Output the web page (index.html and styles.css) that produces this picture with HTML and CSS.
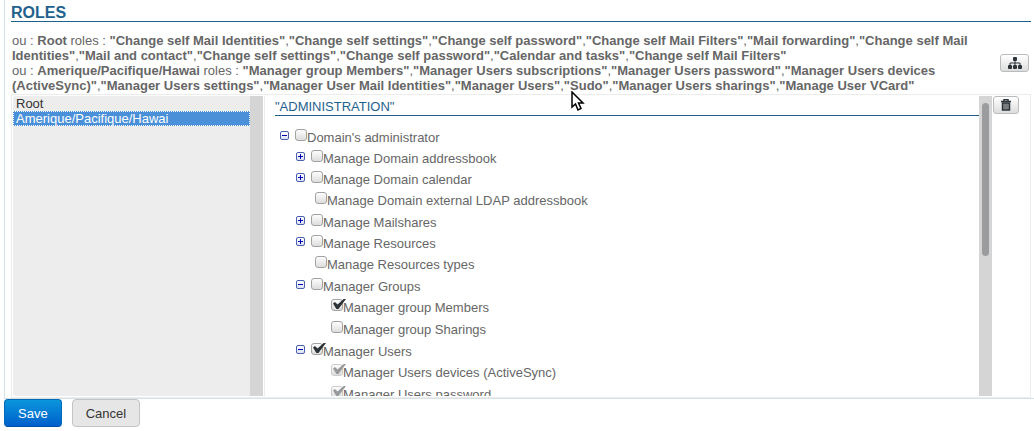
FILE: index.html
```html
<!DOCTYPE html>
<html lang="en">
<head>
<meta charset="utf-8">
<title>Roles</title>
<link rel="stylesheet" href="styles.css">
</head>
<body>
<main class="panel">
  <h1 class="title">ROLES</h1>
  <section class="summary">
    <div class="summary-text">
      <p>ou : <b>Root</b> roles : <b>"Change self Mail Identities"</b>,<b>"Change self settings"</b>,<b>"Change self password"</b>,<b>"Change self Mail Filters"</b>,<b>"Mail forwarding"</b>,<b>"Change self Mail<br>Identities"</b>,<b>"Mail and contact"</b>,<b>"Change self settings"</b>,<b>"Change self password"</b>,<b>"Calendar and tasks"</b>,<b>"Change self Mail Filters"</b></p>
      <p>ou : <b>Amerique/Pacifique/Hawai</b> roles : <b>"Manager group Members"</b>,<b>"Manager Users subscriptions"</b>,<b>"Manager Users password"</b>,<b>"Manager Users devices<br>(ActiveSync)"</b>,<b>"Manager Users settings"</b>,<b>"Manager User Mail Identities"</b>,<b>"Manager Users"</b>,<b>"Sudo"</b>,<b>"Manager Users sharings"</b>,<b>"Manage User VCard"</b></p>
    </div>
    <button class="icon-button tree-button" type="button" aria-label="Select organizational unit">
      <svg width="14" height="12" viewBox="0 0 14 12" fill="#2b3338"><rect x="5" width="4" height="4" rx="1"/><rect y="8" width="4" height="4" rx="1"/><rect x="5" y="8" width="4" height="4" rx="1"/><rect x="10" y="8" width="4" height="4" rx="1"/><path d="M7 3v6M2 9V6h10v3" fill="none" stroke="#2b3338"/></svg>
    </button>
  </section>
  <section class="editor">
    <select class="units" size="8" aria-label="Organizational units">
      <option>Root</option>
      <option class="current" selected>Amerique/Pacifique/Hawai</option>
    </select>
    <div class="roles">
      <div class="roles-view">
        <h2 class="category">"ADMINISTRATION"</h2>
        <ul class="tree">
          <li><div class="node"><button class="toggle open" type="button" aria-label="Collapse"></button><label><input type="checkbox">Domain's administrator</label></div>
            <ul>
              <li><div class="node"><button class="toggle" type="button" aria-label="Expand"></button><label><input type="checkbox">Manage Domain addressbook</label></div></li>
              <li><div class="node"><button class="toggle" type="button" aria-label="Expand"></button><label><input type="checkbox">Manage Domain calendar</label></div></li>
              <li><div class="node leaf"><label><input type="checkbox">Manage Domain external LDAP addressbook</label></div></li>
              <li><div class="node"><button class="toggle" type="button" aria-label="Expand"></button><label><input type="checkbox">Manage Mailshares</label></div></li>
              <li><div class="node"><button class="toggle" type="button" aria-label="Expand"></button><label><input type="checkbox">Manage Resources</label></div></li>
              <li><div class="node leaf"><label><input type="checkbox">Manage Resources types</label></div></li>
              <li><div class="node"><button class="toggle open" type="button" aria-label="Collapse"></button><label><input type="checkbox">Manager Groups</label></div>
                <ul>
                  <li><div class="node leaf"><label><input type="checkbox" checked>Manager group Members</label></div></li>
                  <li><div class="node leaf"><label><input type="checkbox">Manager group Sharings</label></div></li>
                </ul>
              </li>
              <li><div class="node"><button class="toggle open" type="button" aria-label="Collapse"></button><label><input type="checkbox" checked>Manager Users</label></div>
                <ul>
                  <li><div class="node leaf"><label><input type="checkbox" checked disabled>Manager Users devices (ActiveSync)</label></div></li>
                  <li><div class="node leaf"><label><input type="checkbox" checked disabled>Manager Users password</label></div></li>
                </ul>
              </li>
            </ul>
          </li>
        </ul>
      </div>
      <div class="track"><div class="thumb"></div></div>
    </div>
    <button class="icon-button trash-button" type="button" aria-label="Delete">
      <svg width="10" height="12" viewBox="0 0 10 12"><path d="M3 2V.5h4V2M0 2.500h10" fill="none" stroke="#2b3338" stroke-width="1.500"/><path d="M1.500 4h7v7h-7z" fill="#85898b" stroke="#2b3338" stroke-width="1.500"/><path d="M4 4.500v6M6 4.500v6" stroke="#5a6063" stroke-width=".6"/></svg>
    </button>
  </section>
</main>
<footer class="actions">
  <button class="action save" type="button">Save</button>
  <button class="action cancel" type="button">Cancel</button>
</footer>
<svg class="pointer" width="14" height="21" viewBox="0 0 14 21" aria-hidden="true"><path d="M1 1v15l3.500-3 2.500 6 3-1.500-2.500-5.500H12z" fill="#fff" stroke="#000" stroke-width="1.500"/></svg>
</body>
</html>
```
FILE: styles.css
```css
* {
  box-sizing: border-box;
}

body {
  margin: 0;
  background: #fff;
  color: #666;
  font: 13px/15px "Liberation Sans", Arial, sans-serif;
}

button, select, input {
  font: inherit;
  margin: 0;
}

.panel {
  margin-left: 4px;
  padding: 3px 3px 0 6px;
  border-left: 1px solid #d6e4ea;
  border-bottom: 1px solid #d6e2e5;
}

.title {
  margin: 0;
  height: 19px;
  border-bottom: 1px solid #1f618d;
  color: #1f618d;
  font-size: 16px;
  line-height: 19px;
}

.summary {
  display: flex;
  justify-content: space-between;
  padding: 11px 2px 0 1px;
}

.summary-text {
  white-space: nowrap;
}

.summary p {
  margin: 0;
}

.icon-button {
  display: flex;
  flex: none;
  align-items: center;
  justify-content: center;
  height: 18px;
  padding: 0;
  border: 1px solid #b8bcbe;
  border-radius: 3px;
  background: linear-gradient(#fff, #ddd);
}

.tree-button {
  width: 29px;
  margin-top: 21px;
}

.trash-button {
  width: 26px;
  margin: 0 11px 0 1px;
}

.editor {
  display: flex;
  height: 304px;
  margin-top: 1px;
  padding: 1px 0 1px 1px;
  border: 1px solid #ececec;
}

.units {
  flex: none;
  width: 250px;
  padding: 0;
  border: 0;
  border-right: 13px solid #d5d5d5;
  border-radius: 3px 0 0 3px;
  outline: none;
  overflow: hidden;
  background: #ededed;
  color: #333;
}

.units option {
  min-height: 15px;
  padding: 0 3px;
  line-height: 15px;
}

.units .current {
  outline: 1px dotted #fff;
  outline-offset: -1px;
  background: #4a90d9 linear-gradient(#4a90d9, #4a90d9);
  color: #fff;
}

.roles {
  display: flex;
  flex: 1;
  min-width: 0;
  margin-left: 1px;
  border-left: 1px solid #ececec;
}

.roles-view {
  flex: 1;
  min-width: 0;
  padding-left: 10px;
  overflow: hidden;
}

.category {
  margin: 0;
  height: 20px;
  border-bottom: 1px solid #1f618d;
  color: #1f618d;
  font-size: 13px;
  font-weight: normal;
  line-height: 22px;
}

.tree, .tree ul {
  margin: 0;
  padding: 0;
  list-style: none;
}

.tree {
  padding: 10px 0 0 5px;
}

.tree ul {
  padding-left: 16px;
}

.node {
  display: flex;
  height: 21px;
}

.node.leaf {
  height: 22px;
  padding-left: 19px;
}

.node label {
  display: flex;
  line-height: 23px;
  white-space: nowrap;
}

.toggle {
  position: relative;
  flex: none;
  width: 9px;
  height: 9px;
  margin: 5px 6px 0 0;
  padding: 0;
  border: 1px solid #4a5fae;
  border-radius: 2px;
  background: linear-gradient(#fff, #dce2f4);
}

.toggle::before, .toggle::after {
  content: "";
  position: absolute;
  top: 3px;
  left: 1px;
  width: 5px;
  height: 1px;
  background: #0000b8;
}

.toggle::after {
  top: 1px;
  left: 3px;
  width: 1px;
  height: 5px;
}

.toggle.open::after {
  display: none;
}

.node input {
  appearance: none;
  position: relative;
  flex: none;
  width: 12px;
  height: 12px;
  margin-top: 3px;
  border: 1px solid #a2a2a2;
  border-radius: 3px;
  background: linear-gradient(#fdfdfd, #ddd);
}

.node input:checked::before {
  content: "";
  position: absolute;
  top: -1px;
  left: 1px;
  width: 13px;
  height: 10px;
  background: #2b3338;
  clip-path: polygon(0 45%, 15% 30%, 35% 55%, 82% 0, 100% 0, 42% 100%, 26% 100%);
}

.node input:disabled {
  border-color: #ccc;
}

.node input:disabled::before {
  background: #989b9c;
}

.track {
  flex: none;
  width: 13px;
  padding: 7px 3px 0;
  background: #d5d5d5;
}

.thumb {
  height: 153px;
  border-radius: 4px;
  background: #9a9c9d;
}

.actions {
  display: flex;
  gap: 10px;
  padding: 0 4px;
}

.action {
  height: 28px;
  padding: 0 13px;
  border: 1px solid #c4c4c4;
  border-radius: 4px;
  background: #e6e6e6;
  color: #333;
}

.save {
  border-color: #0069b5 #0069b5 #004fa3;
  background: linear-gradient(#0a96dc, #0060cc);
  color: #fff;
}

.pointer {
  position: absolute;
  top: 91px;
  left: 571px;
}
```
